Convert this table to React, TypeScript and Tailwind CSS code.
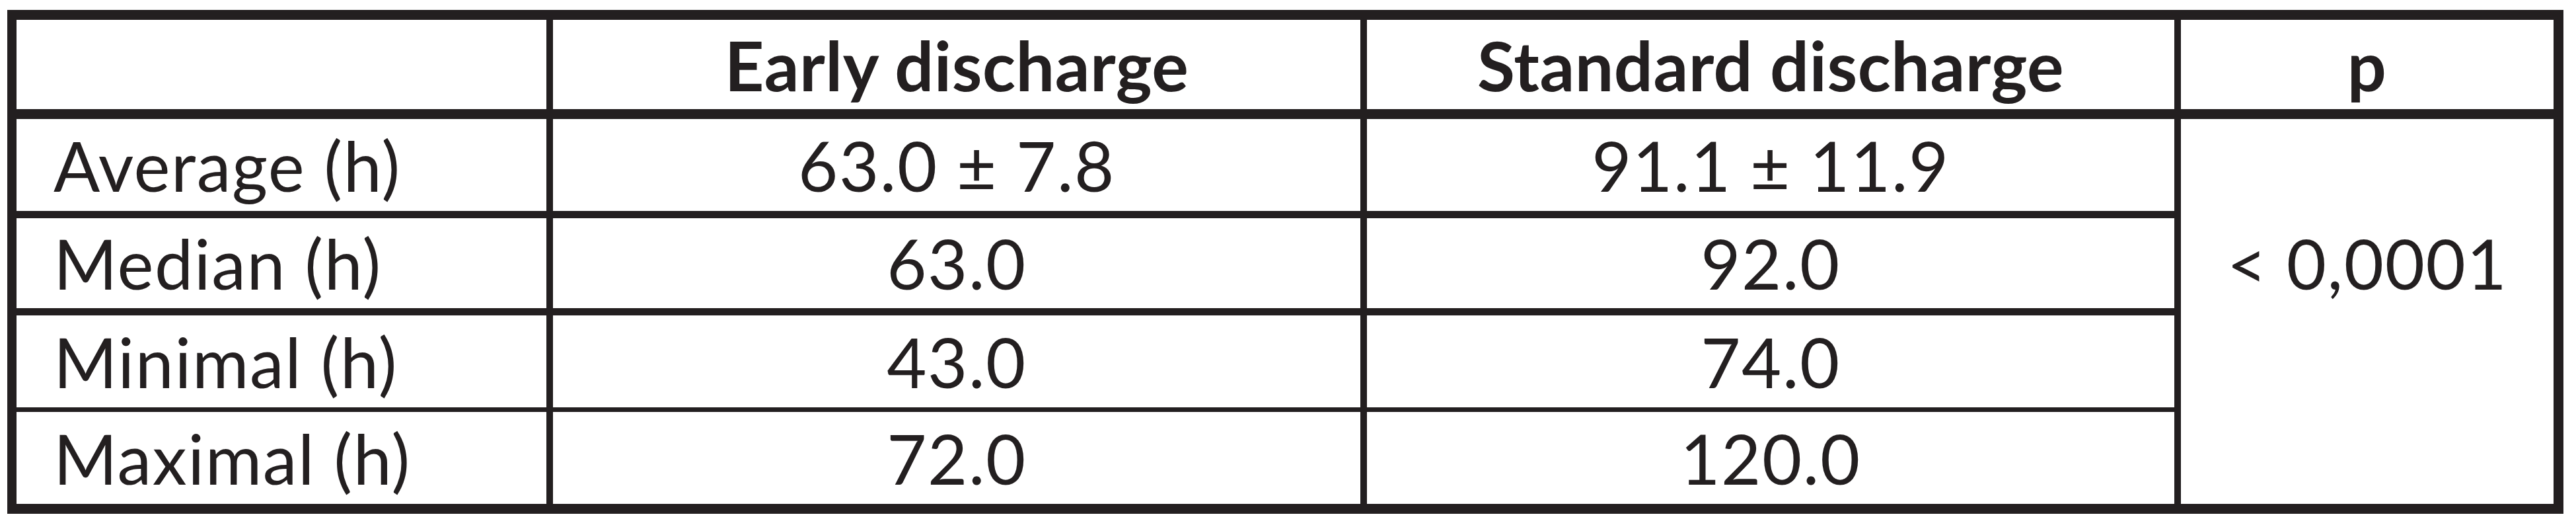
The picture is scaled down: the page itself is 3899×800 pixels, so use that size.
import React from "react";

const rows = [
  { label: "Average (h)", early: "63.0 ± 7.8", standard: "91.1 ± 11.9", gap: "mt-[15px]", h: "h-[139px]" },
  { label: "Median (h)", early: "63.0", standard: "92.0", gap: "mt-[11px]", h: "h-[136px]" },
  { label: "Minimal (h)", early: "43.0", standard: "74.0", gap: "mt-[11px]", h: "h-[139px]" },
  { label: "Maximal (h)", early: "72.0", standard: "120.0", gap: "mt-[7px]", h: "h-[139px]" },
];

const App = () => {
  return (
    <div className="w-[3899px] h-[800px] bg-white pt-[15px] pl-[11px] font-['Lato',sans-serif] text-[#231f20] text-[104px] leading-none tracking-[0.015em]">
      <div className="w-[3869px] border-[15px] border-l-[14px] border-[#231f20] bg-[#231f20]">
        <div className="grid grid-cols-[802px_1222px_1222px_564px] gap-x-[10px]">
          {/* header row */}
          <div className="h-[135px] bg-white" />
          <div className="h-[135px] bg-white flex items-center justify-center font-bold tracking-[0.005em]">
            Early discharge
          </div>
          <div className="h-[135px] bg-white flex items-center justify-center font-bold tracking-[0.005em]">
            Standard discharge
          </div>
          <div className="h-[135px] bg-white flex items-center justify-center font-bold">
            p
          </div>

          {rows.map((row, i) => (
            <React.Fragment key={row.label}>
              <div className={`${row.gap} ${row.h} bg-white flex items-center pl-[56px]`}>
                {row.label}
              </div>
              <div className={`${row.gap} ${row.h} bg-white flex items-center justify-center`}>
                {row.early}
              </div>
              <div className={`${row.gap} ${row.h} bg-white flex items-center justify-center`}>
                {row.standard}
              </div>
              {/* p value spans all data rows */}
              {i === 0 && (
                <div className="row-span-4 mt-[15px] bg-white">
                  <div className="h-[436px] flex items-center justify-center">
                    &lt; 0,0001
                  </div>
                </div>
              )}
            </React.Fragment>
          ))}
        </div>
      </div>
    </div>
  );
};

export default App;
